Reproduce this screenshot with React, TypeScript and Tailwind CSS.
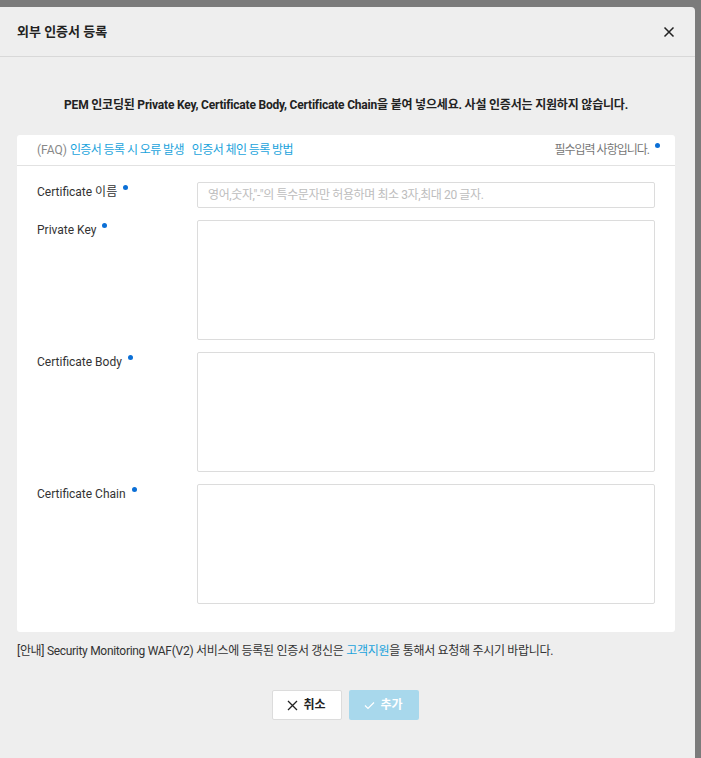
import React from "react";

const font = { fontFamily: 'Roboto, "Noto Sans CJK KR", sans-serif' };

function Dot() {
  return <span className="ml-[6px] inline-block h-[5px] w-[5px] -translate-y-[5px] rounded-full bg-[#0b6fd6] align-middle" />;
}

function Field({ label, area }: { label: string; area?: boolean }) {
  return (
    <div className="flex">
      <div className="w-[160px] shrink-0 pt-[1px] text-[12px] text-[#333]">
        {label}
        <Dot />
      </div>
      {area ? (
        <textarea className="h-[120px] flex-1 resize-none rounded-[2px] border border-[#dcdcdc] bg-white outline-none" />
      ) : (
        <input
          className="h-[26px] flex-1 rounded-[2px] border border-[#dcdcdc] bg-white px-[10px] text-[12px] tracking-[-0.4px] outline-none placeholder:text-[#bdbdbd]"
          placeholder={'영어,숫자,"-"의 특수문자만 허용하며 최소 3자,최대 20 글자.'}
        />
      )}
    </div>
  );
}

export default function App() {
  return (
    <div className="h-[758px] w-[701px] overflow-hidden bg-[#7b7b7b] pt-[7px]" style={font}>
      <div className="h-[760px] w-[695px] rounded-tr-[4px] bg-[#eeeeee]">
        <div className="flex h-[50px] items-center justify-between border-b border-[#d8d8d8] pl-[17px] pr-[20px]">
          <div className="text-[13px] font-bold text-[#222]">외부 인증서 등록</div>
          <svg width="12" height="12" viewBox="0 0 12 12" className="text-[#222]">
            <path d="M1.5 1.5 L10.5 10.5 M10.5 1.5 L1.5 10.5" stroke="currentColor" strokeWidth="1.5" />
          </svg>
        </div>
        <div className="pl-[17px] pr-[20px]">
          <div className="pt-[39px] text-center text-[12px] font-bold tracking-[-0.2px] text-[#222]">
            PEM 인코딩된 Private Key, Certificate Body, Certificate Chain을 붙여 넣으세요. 사설 인증서는 지원하지 않습니다.
          </div>
          <div className="mt-[21px] rounded-[3px] bg-white">
            <div className="flex h-[31px] items-center justify-between border-b border-[#e2e2e2] pl-[20px] pr-[15px] text-[12px]">
              <div>
                <span className="text-[#888]">(FAQ) </span>
                <span className="tracking-[-0.6px] text-[#1aa3dc]">인증서 등록 시 오류 발생</span>
                <span className="ml-[8px] tracking-[-0.6px] text-[#1aa3dc]">인증서 체인 등록 방법</span>
              </div>
              <div className="tracking-[-1px] text-[#777]">
                필수입력 사항입니다.
                <Dot />
              </div>
            </div>
            <div className="flex flex-col gap-[12px] px-[20px] pb-[28px] pt-[16px]">
              <Field label="Certificate 이름" />
              <Field label="Private Key" area />
              <Field label="Certificate Body" area />
              <Field label="Certificate Chain" area />
            </div>
          </div>
          <div className="mt-[10px] text-[12px] tracking-[-0.3px] text-[#333]">
            [안내] Security Monitoring WAF(V2) 서비스에 등록된 인증서 갱신은 <span className="text-[#1aa3dc]">고객지원</span>을 통해서 요청해 주시기 바랍니다.
          </div>
          <div className="mt-[30px] flex justify-center gap-[7px] pr-[2px]">
            <button className="flex h-[30px] w-[70px] items-center justify-center gap-[5px] rounded-[2px] border border-[#dcdcdc] bg-white text-[12px] font-bold text-[#222]">
              <svg width="11" height="11" viewBox="0 0 11 11">
                <path d="M1 1 L10 10 M10 1 L1 10" stroke="#222" strokeWidth="1.3" />
              </svg>
              취소
            </button>
            <button className="flex h-[30px] w-[70px] items-center justify-center gap-[5px] rounded-[2px] bg-[#a8d8ec] text-[12px] font-bold text-white">
              <svg width="11" height="9" viewBox="0 0 11 9">
                <path d="M1 4.5 L4 7.5 L10 1.5" stroke="#fff" strokeWidth="1.2" fill="none" />
              </svg>
              추가
            </button>
          </div>
        </div>
      </div>
    </div>
  );
}
